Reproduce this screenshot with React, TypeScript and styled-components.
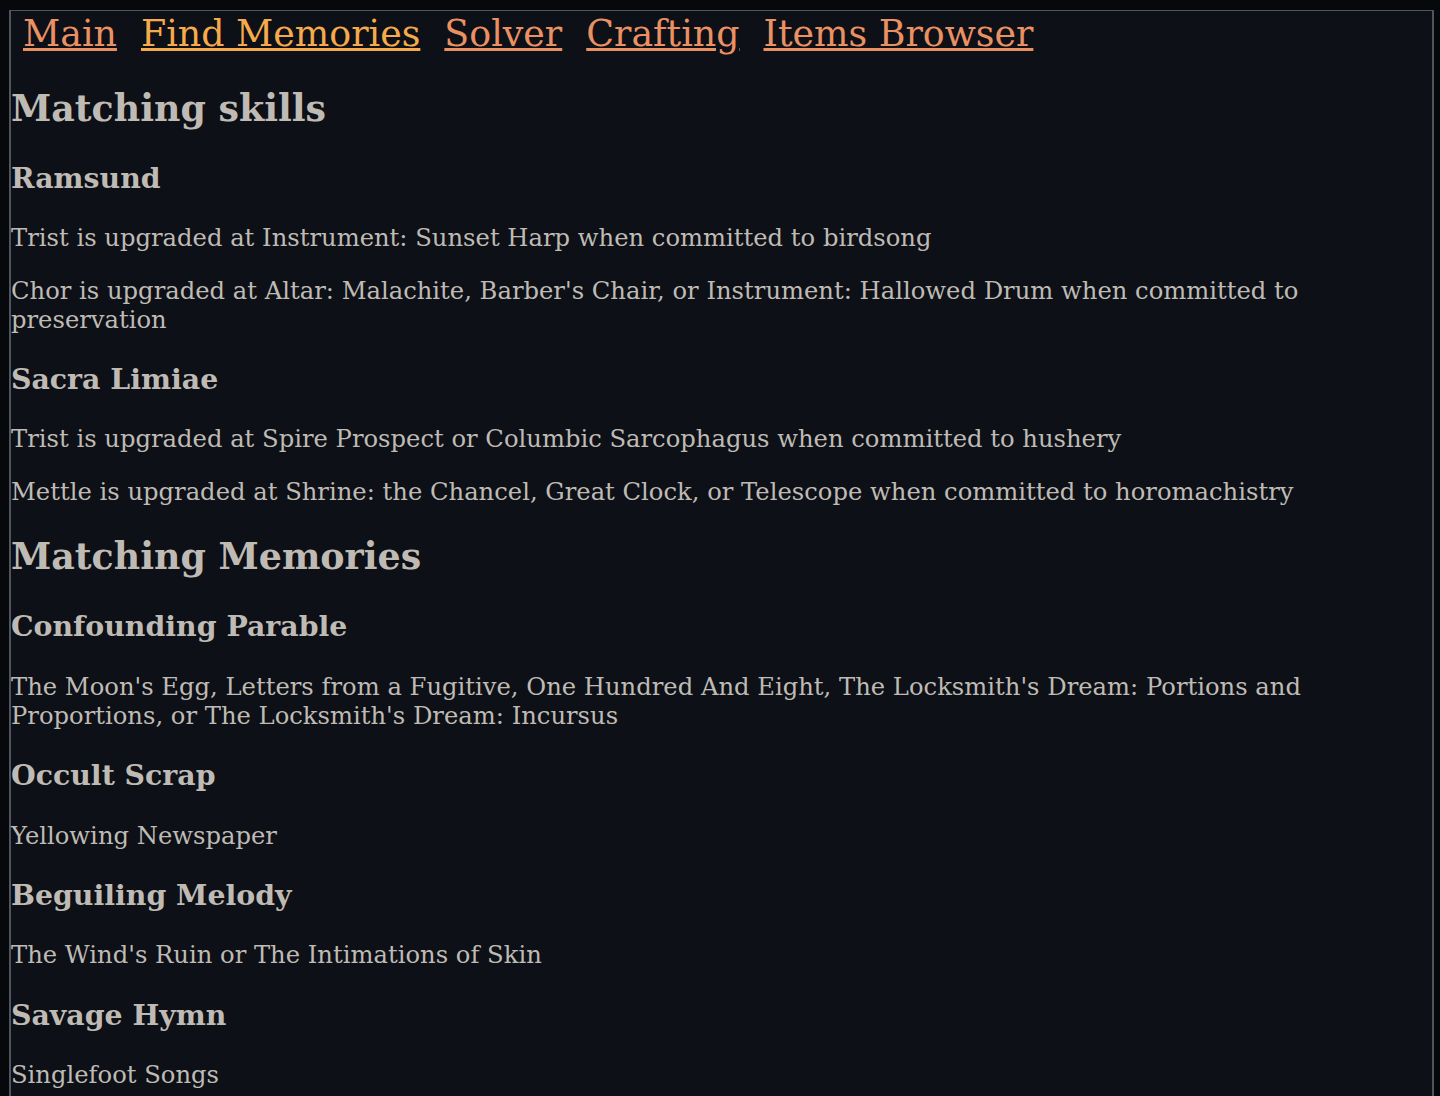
import React from 'react';
import styled, { createGlobalStyle } from 'styled-components';

const GlobalStyle = createGlobalStyle`
    html {
        background: #07080b;
    }
    body {
        margin: 10px 6px 0 9px;
        font-family: "DejaVu Serif", serif;
        font-size: 24.25px;
        color: #bfbbb4;
    }
`

const links = [
    { label: 'Main', active: false },
    { label: 'Find Memories', active: true },
    { label: 'Solver', active: false },
    { label: 'Crafting', active: false },
    { label: 'Items Browser', active: false },
];

const skills = [
    {
        name: 'Ramsund',
        lines: [
            'Trist is upgraded at Instrument: Sunset Harp when committed to birdsong',
            "Chor is upgraded at Altar: Malachite, Barber's Chair, or Instrument: Hallowed Drum when committed to preservation",
        ],
    },
    {
        name: 'Sacra Limiae',
        lines: [
            'Trist is upgraded at Spire Prospect or Columbic Sarcophagus when committed to hushery',
            'Mettle is upgraded at Shrine: the Chancel, Great Clock, or Telescope when committed to horomachistry',
        ],
    },
];

const memories = [
    {
        name: 'Confounding Parable',
        text: "The Moon's Egg, Letters from a Fugitive, One Hundred And Eight, The Locksmith's Dream: Portions and Proportions, or The Locksmith's Dream: Incursus",
    },
    { name: 'Occult Scrap', text: 'Yellowing Newspaper' },
    { name: 'Beguiling Melody', text: "The Wind's Ruin or The Intimations of Skin" },
    { name: 'Savage Hymn', text: 'Singlefoot Songs' },
];

const App = () => {
    return (
        <>
            <GlobalStyle />
            <Page>
                <Nav>
                    {links.map((l) => (
                        <NavLink key={l.label} href="#" active={l.active}>
                            {l.label}
                        </NavLink>
                    ))}
                </Nav>
                <SectionTitle>Matching skills</SectionTitle>
                {skills.map((s) => (
                    <div key={s.name}>
                        <ItemTitle>{s.name}</ItemTitle>
                        {s.lines.map((line) => (
                            <Text key={line}>{line}</Text>
                        ))}
                    </div>
                ))}
                <SectionTitle>Matching Memories</SectionTitle>
                {memories.map((m) => (
                    <div key={m.name}>
                        <ItemTitle>{m.name}</ItemTitle>
                        <Text>{m.text}</Text>
                    </div>
                ))}
            </Page>
        </>
    );
};

const Page = styled.div`
    background: #0d1017;
    border: 1px solid #50545c;
    border-left-width: 2px;
    border-right-width: 2px;
    border-bottom: none;
    min-height: 1200px;
`

const Nav = styled.nav`
    display: flex;
    gap: 24px;
    padding: 1.5px 12px 0;
    margin-bottom: 33px;
`

const NavLink = styled.a<{ active: boolean }>`
    font-size: 1.5em;
    line-height: 42px;
    color: ${({ active }) => (active ? '#f5aa4b' : '#ea9163')};
    text-decoration: underline;
`

const SectionTitle = styled.h1`
    font-size: 1.5em;
    line-height: 42px;
    font-weight: bold;
    margin: 30.5px 0 32px;
`

const ItemTitle = styled.h3`
    font-size: 1.17em;
    line-height: 33px;
    font-weight: bold;
    margin: 29.25px 0 28.5px;
`

const Text = styled.p`
    line-height: 29px;
    margin: 23.5px 0;
`

export default App;
